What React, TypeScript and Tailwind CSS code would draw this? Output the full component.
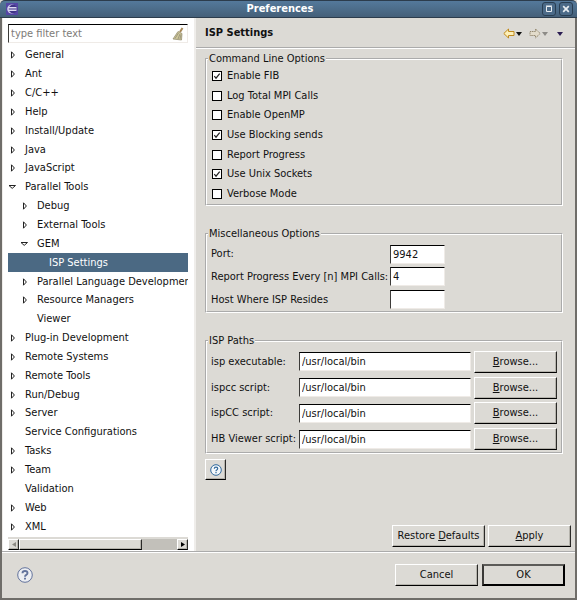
import type { ReactNode } from "react";

type Node = { label: string; level: 0 | 1 | 2; state?: "open" | "closed"; selected?: boolean };

const nodes: Node[] = [
  { label: "General", level: 0, state: "closed" },
  { label: "Ant", level: 0, state: "closed" },
  { label: "C/C++", level: 0, state: "closed" },
  { label: "Help", level: 0, state: "closed" },
  { label: "Install/Update", level: 0, state: "closed" },
  { label: "Java", level: 0, state: "closed" },
  { label: "JavaScript", level: 0, state: "closed" },
  { label: "Parallel Tools", level: 0, state: "open" },
  { label: "Debug", level: 1, state: "closed" },
  { label: "External Tools", level: 1, state: "closed" },
  { label: "GEM", level: 1, state: "open" },
  { label: "ISP Settings", level: 2, selected: true },
  { label: "Parallel Language Development", level: 1, state: "closed" },
  { label: "Resource Managers", level: 1, state: "closed" },
  { label: "Viewer", level: 1 },
  { label: "Plug-in Development", level: 0, state: "closed" },
  { label: "Remote Systems", level: 0, state: "closed" },
  { label: "Remote Tools", level: 0, state: "closed" },
  { label: "Run/Debug", level: 0, state: "closed" },
  { label: "Server", level: 0, state: "closed" },
  { label: "Service Configurations", level: 0 },
  { label: "Tasks", level: 0, state: "closed" },
  { label: "Team", level: 0, state: "closed" },
  { label: "Validation", level: 0 },
  { label: "Web", level: 0, state: "closed" },
  { label: "XML", level: 0, state: "closed" },
];

const indent = { 0: "pl-0", 1: "pl-3", 2: "pl-6" };

const options = [
  { label: "Enable FIB", on: true },
  { label: "Log Total MPI Calls", on: false },
  { label: "Enable OpenMP", on: false },
  { label: "Use Blocking sends", on: true },
  { label: "Report Progress", on: false },
  { label: "Use Unix Sockets", on: true },
  { label: "Verbose Mode", on: false },
];

const misc = [
  { id: "port", label: "Port:", value: "9942" },
  { id: "every", label: "Report Progress Every [n] MPI Calls:", value: "4" },
  { id: "host", label: "Host Where ISP Resides", value: "" },
];

const paths = [
  { id: "isp", label: "isp executable:" },
  { id: "ispcc", label: "ispcc script:" },
  { id: "ispCC", label: "ispCC script:" },
  { id: "hb", label: "HB Viewer script:" },
];

const sunken =
  "h-[19px] border border-t-black border-l-[#3c3b39] border-r-[#efebe7] border-b-[#efebe7] bg-white px-[2px] outline-none";
const raised =
  "border border-t-white border-l-white border-r-[#2b2a28] border-b-black bg-[#dcdad5] text-center shadow-[inset_-1px_-1px_0_#b5b3ac]";
const group = "border-2 border-white [border-style:groove]";

function Expander({ state }: { state?: "open" | "closed" }) {
  return (
    <svg className="h-2 w-2 shrink-0" viewBox="0 0 8 8" fill="white" stroke="#222" aria-hidden="true">
      {state === "closed" && <path d="M3.5 0.8 L6.4 4 L3.5 7.2 Z" />}
      {state === "open" && <path d="M1 2.5 H7.5 L4.2 5.4 Z" />}
    </svg>
  );
}

function Button({ children, wide, primary }: { children: ReactNode; wide?: boolean; primary?: boolean }) {
  const look = primary
    ? "border-2 border-t-[#5c5b58] border-l-[#3a3937] border-r-black border-b-black bg-[#dcdad5] text-center"
    : raised;
  return (
    <button type="button" className={`h-[22px] shrink-0 ${wide ? "w-[93px]" : "w-[83px]"} ${look}`}>
      {children}
    </button>
  );
}

function TitleBar() {
  return (
    <header className="flex h-[18px] shrink-0 items-center rounded-t-[5px] border-y border-[#2c3c4c] bg-linear-to-b from-[#54799b] to-[#456079] pr-1 pl-[6px] text-white">
      <svg className="h-3 w-3" viewBox="0 0 12 12" aria-hidden="true">
        <rect width="12" height="12" fill="#5546a5" />
        <circle cx="5.8" cy="6" r="4.6" fill="#cfcbea" />
        <circle cx="7" cy="6" r="4.3" fill="#3f3386" />
        <path d="M2 4.500h8.500M1.800 6h9M2 7.500h8.500" stroke="#dcd9f2" />
      </svg>
      <h1 className="flex-1 text-center font-bold">Preferences</h1>
      <div className="flex gap-[3px]">
        <button type="button" aria-label="Maximize" className="h-[14px] w-[14px] rounded-[3px] border border-[#293e52] bg-[#4b6a88]">
          <svg className="h-3 w-3" viewBox="0 0 12 12" fill="none" stroke="#e8edf1" aria-hidden="true">
            <path d="M3.500 3.500h5v5h-5zM3 3h6" />
          </svg>
        </button>
        <button type="button" aria-label="Close" className="h-[14px] w-[14px] rounded-[3px] border border-[#293e52] bg-[#4b6a88]">
          <svg className="h-3 w-3" viewBox="0 0 12 12" stroke="#e8edf1" strokeWidth="1.7" aria-hidden="true">
            <path d="M3.2 3.2l5.6 5.6M8.8 3.2L3.2 8.8" />
          </svg>
        </button>
      </div>
    </header>
  );
}

function Sidebar() {
  return (
    <nav className="flex w-[193px] shrink-0 flex-col border-r-2 border-[#efedea] bg-white pt-[6px] pr-[6px] pl-[5px]">
      <div className={`flex shrink-0 items-center ${sunken}`}>
        <input
          type="text"
          aria-label="Filter"
          placeholder="type filter text"
          className="min-w-0 flex-1 outline-none placeholder:text-[#7d7b78]"
        />
        <svg className="h-[14px] w-[13px] shrink-0" viewBox="0 0 13 14" aria-hidden="true">
          <path d="M10.500 1L8 5" stroke="#a88a5a" strokeWidth="2" />
          <path d="M6 4.500l4 2L9.500 13 1 12z" fill="#cfc79a" stroke="#8c8566" strokeWidth=".7" />
          <path d="M6.500 6L3 11.500M8 7l-2 5M9 7.500L8 12" stroke="#8a8672" strokeWidth=".7" />
        </svg>
      </div>
      <ul className="mt-[3px] grid min-h-0 flex-1 auto-rows-fr overflow-hidden">
        {nodes.map((n) => (
          <li
            key={n.label}
            className={`flex min-h-0 items-center gap-[9px] overflow-hidden whitespace-nowrap ${indent[n.level]} ${
              n.selected ? "bg-[#4b6983] text-white" : ""
            }`}
          >
            <Expander state={n.state} />
            {n.label}
          </li>
        ))}
      </ul>
      <div className="mt-[1px] mb-[1px] flex h-[13px] shrink-0 border-t-2 border-[#dcdad5] bg-[#c2c0ba]">
        <button type="button" aria-label="Scroll left" className={`flex w-[11px] items-center justify-center ${raised}`}>
          <svg className="h-[5px] w-1" viewBox="0 0 4 5" fill="#8b8983"><path d="M4 0v5L0 2.500z" /></svg>
        </button>
        <div className={`w-[123px] ${raised}`} />
        <div className="flex-1" />
        <button type="button" aria-label="Scroll right" className={`flex w-[11px] items-center justify-center ${raised}`}>
          <svg className="h-[5px] w-1" viewBox="0 0 4 5" fill="black"><path d="M0 0v5l4-2.500z" /></svg>
        </button>
      </div>
    </nav>
  );
}

function Caret({ color }: { color: string }) {
  return (
    <svg className="h-[4px] w-[6px]" viewBox="0 0 6 4" fill={color} aria-hidden="true">
      <path d="M0 0h6L3 4z" />
    </svg>
  );
}

function PageHeader() {
  return (
    <div className="flex h-[31px] shrink-0 items-center justify-between border-b-2 border-white pr-3 pl-[9px] [border-bottom-style:groove]">
      <h2 className="font-bold">ISP Settings</h2>
      <div className="flex items-center pt-[2px]">
        <button type="button" aria-label="Back" className="flex items-center gap-[1px]">
          <svg className="h-[11px] w-3" viewBox="0 0 12 11" fill="#fdf0b8" stroke="#c08a1e" aria-hidden="true">
            <path d="M.8 5.500L5.500 1v2.500h5.500v4H5.500V10z" />
          </svg>
          <Caret color="#111" />
        </button>
        <button type="button" aria-label="Forward" className="ml-[7px] flex items-center gap-[1px]">
          <svg className="h-[11px] w-3" viewBox="0 0 12 11" fill="#e3dccb" stroke="#958a72" strokeDasharray="1.500 .7" aria-hidden="true">
            <path d="M11.200 5.500L6.500 1v2.500H1v4h5.500V10z" />
          </svg>
          <Caret color="#8d8b87" />
        </button>
        <button type="button" aria-label="View menu" className="ml-[9px] flex">
          <Caret color="#2b1d52" />
        </button>
      </div>
    </div>
  );
}

function Option({ label, on }: { label: string; on: boolean }) {
  return (
    <label className="flex items-center gap-[5px]">
      <span className="grid shrink-0 place-items-center">
        <input
          type="checkbox"
          defaultChecked={on}
          className="peer col-start-1 row-start-1 h-[10px] w-[10px] appearance-none border border-black bg-white"
        />
        <svg
          className="pointer-events-none invisible col-start-1 row-start-1 h-[10px] w-[10px] peer-checked:visible"
          viewBox="0 0 10 10"
          fill="none"
          stroke="#222"
          strokeWidth="1.2"
          aria-hidden="true"
        >
          <path d="M2.300 5.200L4 7.200L7.700 2.600" />
        </svg>
      </span>
      {label}
    </label>
  );
}

export default function App() {
  return (
    <div className="flex h-screen flex-col bg-[#dcdad5] font-['DejaVu_Sans_Condensed','DejaVu_Sans',sans-serif] text-[11px] leading-[14px] text-[#111]">
      <TitleBar />
      <div className="flex min-h-0 flex-1 flex-col border-x-2 border-b-2 border-[#6f6d69]">
        <div className="flex min-h-0 flex-1 border-l border-[#efedea]">
          <Sidebar />
          <main className="flex min-w-0 flex-1 flex-col">
            <PageHeader />
            <div className="flex flex-1 flex-col pt-[3px] pr-3 pl-[9px]">
              <fieldset className={`${group} px-[5px]`}>
                <legend className="-ml-[4px] px-[1px]">Command Line Options</legend>
                <div className="grid h-[138px] auto-rows-fr">
                  {options.map((o) => (
                    <Option key={o.label} {...o} />
                  ))}
                </div>
              </fieldset>

              <fieldset className={`${group} mt-[21px] px-1 pt-[2px]`}>
                <legend className="-ml-[3px] px-[1px]">Miscellaneous Options</legend>
                <div className="grid h-[68px] auto-rows-fr">
                  {misc.map((m) => (
                    <div key={m.id} className="flex items-center">
                      <label htmlFor={m.id} className="w-[179px] shrink-0">{m.label}</label>
                      <input id={m.id} type="text" defaultValue={m.value} className={`w-[55px] ${sunken}`} />
                    </div>
                  ))}
                </div>
              </fieldset>

              <fieldset className={`${group} mt-[21px] px-1 pt-[1px]`}>
                <legend className="-ml-[3px] px-[1px]">ISP Paths</legend>
                <div className="grid h-[103px] auto-rows-fr">
                  {paths.map((p) => (
                    <div key={p.id} className="flex items-center">
                      <label htmlFor={p.id} className="w-[88px] shrink-0">{p.label}</label>
                      <input id={p.id} type="text" defaultValue="/usr/local/bin" className={`mr-[3px] min-w-0 flex-1 ${sunken}`} />
                      <Button><u>B</u>rowse...</Button>
                    </div>
                  ))}
                </div>
              </fieldset>

              <button type="button" aria-label="Help" className={`mt-[5px] flex h-[21px] w-[21px] items-center justify-center ${raised}`}>
                <svg className="h-3 w-3" viewBox="0 0 12 12" fill="none" stroke="#31699c" aria-hidden="true">
                  <circle cx="6" cy="6" r="5.300" fill="#f3f7fa" />
                  <path d="M4.300 4.800q0-1.600 1.700-1.600t1.700 1.400q0 .8-.9 1.300T6 7.200M6 8v1.200" strokeWidth="1.200" />
                </svg>
              </button>
            </div>
            <div className="flex justify-end gap-[3px] pr-1 pb-1">
              <Button wide>Restore <u>D</u>efaults</Button>
              <Button><u>A</u>pply</Button>
            </div>
          </main>
        </div>
        <footer className="flex h-[47px] shrink-0 items-center gap-1 border-t-2 border-white pr-[10px] pb-[2px] pl-[15px] [border-top-style:groove]">
          <button type="button" aria-label="Help contents" className="mr-auto">
            <svg className="h-4 w-4" viewBox="0 0 16 16" fill="none" stroke="#63739c" aria-hidden="true">
              <circle cx="8" cy="8" r="7.300" fill="#eceef2" />
              <path d="M5.500 6.300q0-2.300 2.500-2.300t2.500 2q0 1.200-1.200 1.800T8 9.700M8 10.800v1.800" strokeWidth="1.900" />
            </svg>
          </button>
          <Button>Cancel</Button>
          <Button primary>OK</Button>
        </footer>
      </div>
    </div>
  );
}
